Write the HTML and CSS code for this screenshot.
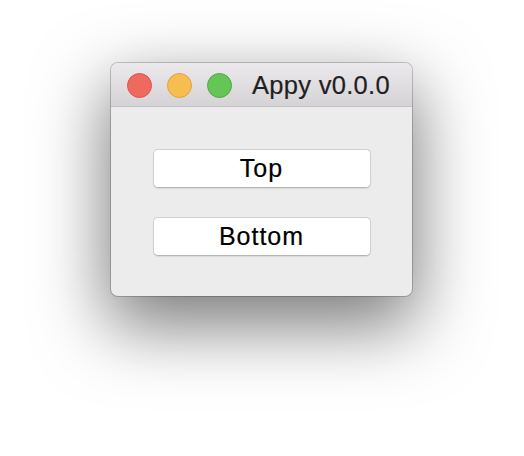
FILE: index.html
```html
<!DOCTYPE html>
<html>
<head>
<meta charset="utf-8">
<link rel="stylesheet" href="styles.css">
</head>
<body>
<div class="window">
  <div class="titlebar">
    <div class="lights">
      <span class="light red"></span>
      <span class="light yellow"></span>
      <span class="light green"></span>
    </div>
    <div class="title">Appy v0.0.0</div>
  </div>
  <div class="content">
    <button class="btn">Top</button>
    <button class="btn">Bottom</button>
  </div>
</div>
</body>
</html>
```

FILE: styles.css
```css
html, body {
  margin: 0;
  padding: 0;
  background: #ffffff;
  width: 524px;
  height: 456px;
  overflow: hidden;
}
body {
  padding-top: 63px;
  box-sizing: border-box;
  font-family: "Liberation Sans", Arial, sans-serif;
}
.window {
  width: 301px;
  height: 233px;
  margin-left: 111px;
  border-radius: 7px;
  background: #ececec;
  box-shadow: 0 0 0 1px rgba(0,0,0,0.2), 0 26px 70px 4px rgba(0,0,0,0.52);
  overflow: hidden;
  display: flex;
  flex-direction: column;
}
.titlebar {
  height: 43px;
  border-bottom: 1px solid #c2c0c2;
  background: linear-gradient(#ebe9eb, #d5d3d5);
  display: flex;
  align-items: center;
  padding-left: 16px;
}
.lights {
  display: flex;
  gap: 15px;
  margin-top: 1px;
}
.light {
  width: 25px;
  height: 25px;
  border-radius: 50%;
  box-sizing: border-box;
}
.red { background: #ee6a5e; border: 1px solid #d6574c; }
.yellow { background: #f6be50; border: 1px solid #dea23c; }
.green { background: #63c655; border: 1px solid #50a846; }
.title {
  margin-left: 20px;
  font-size: 25.5px;
  color: #1f1f1f;
  letter-spacing: 0.3px;
  margin-top: 1px;
  -webkit-text-stroke: 0.2px #1f1f1f;
}
.content {
  flex: 1;
  display: flex;
  flex-direction: column;
  align-items: center;
  padding-top: 42px;
  gap: 29px;
}
.btn {
  width: 218px;
  height: 39px;
  background: #ffffff;
  border: 1px solid #cfcfcf;
  border-bottom-color: #b5b5b5;
  border-radius: 5px;
  box-shadow: 0 1px 1px rgba(0,0,0,0.08);
  font-family: "Liberation Sans", Arial, sans-serif;
  font-size: 25px;
  color: #000;
  padding: 0;
  letter-spacing: 1px;
  line-height: 37px;
  -webkit-text-stroke: 0.2px #000;
}
```
